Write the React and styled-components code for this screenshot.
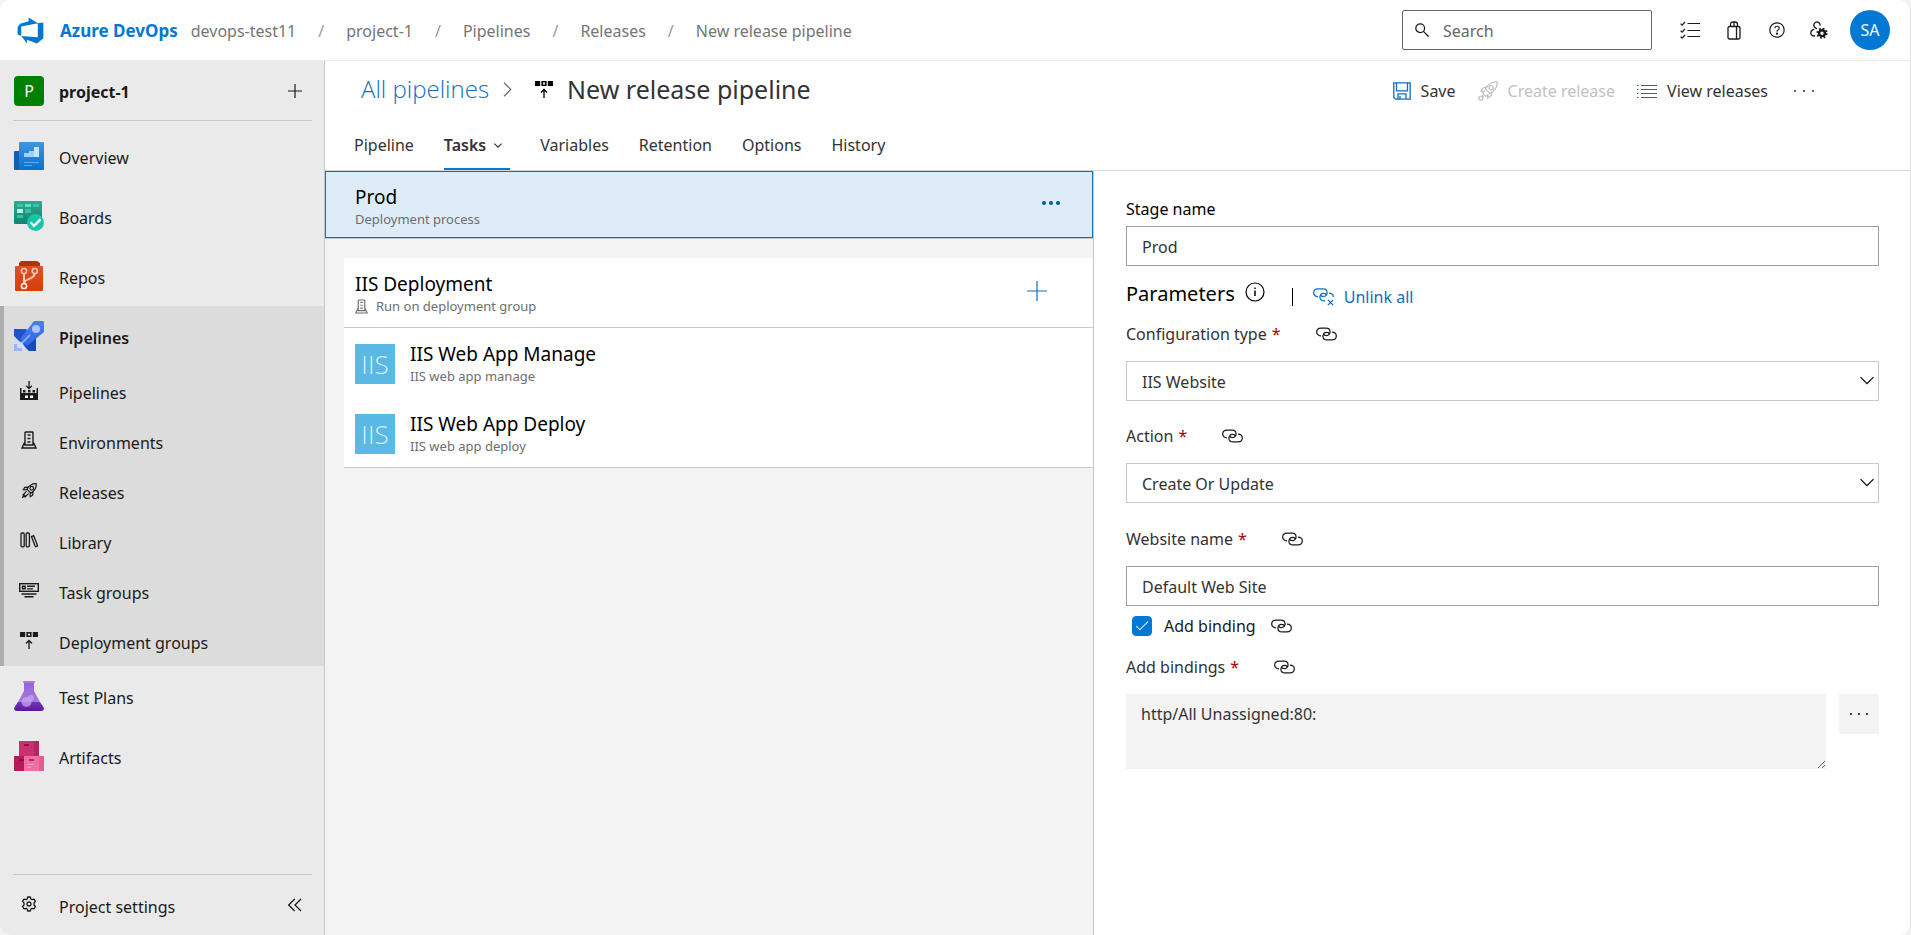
import React from "react";
import styled, { createGlobalStyle, css } from "styled-components";

const GlobalStyle = createGlobalStyle`
  *, *::before, *::after { box-sizing: border-box; }
  html { background: #f3f3f3; }
  body { margin: 0; font-family: "Noto Sans", "Open Sans", sans-serif; font-size: 16px; line-height: 24px; color: #1b1a19; }
  button, input, select, textarea { font: inherit; color: inherit; margin: 0; }
  button { border: 0; background: none; padding: 0; cursor: pointer; }
  a { color: inherit; text-decoration: none; }
  ul { list-style: none; margin: 0; padding: 0; }
  h1, h2, p { margin: 0; font-weight: 400; }
  svg { display: block; flex: none; }
`;

/* ---------- icons ---------- */

const Svg = ({ w = 20, h = w, box = `0 0 ${w} ${h}`, children, ...rest }) => (
  <svg width={w} height={h} viewBox={box} fill="none" stroke="currentColor" aria-hidden="true" {...rest}>
    {children}
  </svg>
);

const LogoIcon = () => (
  <Svg w={29} box="0 0 18 18" stroke="none">
    <path fill="#0078d4" d="M17 4v9.74l-4 3.28-6.2-2.26V17l-3.51-4.59 10.23.8V4.44zm-3.41.49L7.85 1v2.29L2.58 4.84 1 6.87v4.61l2.26 1V6.57z" />
  </Svg>
);

const SearchIcon = () => (
  <Svg w={14} strokeWidth="1.300">
    <circle cx="5.200" cy="5.200" r="4.400" />
    <path d="M8.400 8.400l5.200 5.200" />
  </Svg>
);

const ChecklistIcon = () => (
  <Svg w={20} h={18} strokeWidth="1.200">
    <path d="M7.500 2.500H20M7.500 9.500H20M7.500 15.500H20" />
    <path d="M.6 2.600l1.500 1.500L5 1M.6 9.600l1.500 1.500L5 8M.6 15.600l1.500 1.500L5 14" />
  </Svg>
);

const BagIcon = () => (
  <Svg w={14} h={19} strokeWidth="1.300">
    <rect x="1" y="5.500" width="12" height="12.500" rx="1.500" />
    <path d="M3.500 5.500V3.500Q3.500 1 6 1h2q2.500 0 2.500 2.500v2M7 1v4.500M9.500 5.500V18" />
  </Svg>
);

const HelpIcon = () => (
  <Svg w={16} strokeWidth="1.200">
    <circle cx="8" cy="8" r="7.200" />
    <path d="M5.900 6.300c0-2.800 4.300-2.700 4.300-.1 0 1.700-2.200 1.700-2.200 3.500" />
    <circle cx="8" cy="11.700" r=".5" fill="currentColor" />
  </Svg>
);

const UserSettingsIcon = () => (
  <Svg w={18} h={18} strokeWidth="1.300">
    <path d="M4.700 6.200a3.100 3.100 0 1 1 5.300-1.500M4.700 6.200c.6.900 1.300 1.300 2.300 1.500M4.200 8.200C1.800 9 .8 10.700.8 12c0 2 1.700 3 4.200 3" />
    <circle cx="12" cy="12.200" r="2.900" strokeWidth="2.400" />
    <circle cx="12" cy="12.200" r="4.700" strokeWidth="1.800" strokeDasharray="1.850 1.840" />
  </Svg>
);

const OverviewIcon = () => (
  <Svg w={30} stroke="none">
    <defs>
      <linearGradient id="ov" x1="0" y1="0" x2="0" y2="1"><stop stopColor="#3f96e0" /><stop offset="1" stopColor="#0672d2" /></linearGradient>
    </defs>
    <path fill="#1361ae" d="M1 10h6v19H1a1 1 0 0 1-1-1V11a1 1 0 0 1 1-1z" />
    <rect x="5" y="1" width="25" height="28" rx="1" fill="url(#ov)" />
    <path fill="#a4d0f6" d="M10 12h5v-2h5V6h5v10H10z" />
    <path fill="#e3f2ff" d="M20 6h5v10h-5z" opacity=".6" />
    <path fill="#5eaef0" d="M10 21h15v1H10zM10 24h8v1h-8z" />
  </Svg>
);

const BoardsIcon = () => (
  <Svg w={30} stroke="none">
    <defs>
      <linearGradient id="bo" x1="0" y1="0" x2="0" y2="1"><stop stopColor="#31a892" /><stop offset="1" stopColor="#128470" /></linearGradient>
    </defs>
    <rect width="28" height="23" rx="1" fill="url(#bo)" />
    <path fill="#37c2a4" d="M3 3h6v3H3zM19 3h6v3h-6zM11 8h6v4h-6zM3 14h6v3H3z" />
    <path fill="#5ce0c5" d="M11 3h6v3h-6z" />
    <path fill="#b5fff0" d="M3 8h6v4H3z" />
    <circle cx="21.500" cy="21.500" r="8.500" fill="#1cc5a8" />
    <path stroke="#fff" strokeWidth="2.400" fill="none" d="M16.500 21.500l3.500 3.300 6.500-6.500" />
  </Svg>
);

const ReposIcon = () => (
  <Svg w={30} strokeWidth="1.500" stroke="#ffc9b0">
    <defs>
      <linearGradient id="re" x1="0" y1="0" x2="0" y2="1"><stop stopColor="#d9522b" /><stop offset="1" stopColor="#dc3c06" /></linearGradient>
    </defs>
    <path fill="#b83106" stroke="none" d="M7 0h16l3 2v4H5V2z" />
    <rect x="1" y="5" width="28" height="25" rx="1" fill="url(#re)" stroke="none" />
    <path d="M10 13v9M20.500 13c0 5-9 4.500-10.300 8.500" strokeWidth="2" />
    <circle cx="10" cy="10" r="2.600" />
    <circle cx="20.800" cy="10" r="2.600" />
    <circle cx="10" cy="25" r="2.600" stroke="#fff" />
  </Svg>
);

const RocketIcon = () => (
  <Svg w={30} stroke="none">
    <defs>
      <linearGradient id="ro" x1="0" y1="0" x2="0" y2="1"><stop stopColor="#4d7ff0" /><stop offset="1" stopColor="#2f66e4" /></linearGradient>
    </defs>
    <path fill="#1d55c6" d="M0 8h12l10 10v12h-7L0 15z" />
    <path fill="#164bbd" d="M22 15v15h-7l-4-5z" />
    <path fill="url(#ro)" d="M20 0h9a1 1 0 0 1 1 1v10L13 25l-7-7z" />
    <circle cx="22" cy="8" r="4" fill="#a9c4ff" />
    <path stroke="#86a9fa" strokeWidth="1.800" d="M7 23l9-9" />
    <path fill="#c9daff" d="M3 20l5 1 3 5-4-2v2l-3-3H1z" opacity=".8" />
    <path fill="#94b6f8" d="M0 23h3v4h5v3H0z" />
  </Svg>
);

const FlaskIcon = () => (
  <Svg w={30} stroke="none">
    <defs>
      <linearGradient id="fl" x1="0" y1="0" x2="0" y2="1"><stop stopColor="#9666d4" /><stop offset="1" stopColor="#a67bdb" /></linearGradient>
      <linearGradient id="fb" x1="0" y1="0" x2="0" y2="1"><stop stopColor="#7434bd" /><stop offset="1" stopColor="#5a189e" /></linearGradient>
    </defs>
    <path fill="url(#fl)" d="M10 1h10v9l6 11H4l6-11z" />
    <rect x="9" width="12" height="2" rx="1" fill="#a67bdb" />
    <path fill="url(#fb)" d="M4 21h22l4 6c0 2-1 3-3 3H3c-2 0-3-1-3-3z" />
    <circle cx="17" cy="17" r="3" fill="#bf96ec" />
    <circle cx="12.500" cy="21" r="5" fill="#c9a3f0" opacity=".75" />
  </Svg>
);

const ArtifactsIcon = () => (
  <Svg w={30} stroke="none">
    <path fill="#cb3170" d="M5 0h20v15H5z" />
    <path fill="#b82461" d="M20 0h5v15h-5z" />
    <path fill="#b51a59" d="M0 15h10v15H1a1 1 0 0 1-1-1z" />
    <path fill="#ee70a3" d="M10 15h20v14a1 1 0 0 1-1 1H10z" />
    <path fill="#e55b93" d="M25 15h5v14a1 1 0 0 1-1 1h-4z" />
    <path fill="#8d1144" d="M10 3h5v2h-5zM5 18h5v2H5z" />
    <path fill="#c8225f" d="M15 18h5v2h-5z" />
    <path fill="#f79fc2" d="M13 23h7v1h-7zM13 26h4v1h-4z" />
  </Svg>
);

const FactoryIcon = () => (
  <Svg w={18} h={19} stroke="none" fill="currentColor">
    <path d="M0 7h1.500v5h15V7H18v12H0z" />
    <path d="M3 9h2.500v2.500H3zM8 9h2.500v2.500H8zM12.500 9H15v2.500h-2.500z" />
    <path d="M5 14.500h3V17H5zM10 14.500h3V17h-3z" fill="#fff" />
    <path d="M8.400 0h1.300v6l1.700-1.700.9.900L9 8.400 5.800 5.200l.9-.9L8.400 6z" />
  </Svg>
);

const ServerIcon = ({ w = 16, h = 18 }) => (
  <Svg w={w} h={h} box="0 0 16 18" strokeWidth="1.400">
    <path d="M4 14V1.700Q4 1 4.700 1h6.600q.7 0 .7.700V14zM3.500 11.500L1 17h14l-2.500-5.500M6.500 4h3M6.500 7.500h3M6.500 11h3" />
  </Svg>
);

const ReleaseIcon = () => (
  <Svg w={15} box="0 0 16 16" strokeWidth="1.300">
    <path d="M15.200.8c-4.400-.3-7.200 1.500-10 5.700l4.300 4.300c4.200-2.800 6-5.600 5.700-10zM6.500 4.300L3 4.600 1.400 7.200l3.500.2M11.700 9.500l-.3 3.500-2.600 1.600-.2-3.500" />
    <circle cx="10.400" cy="5.600" r="1.900" />
    <path d="M4.800 9L1.200 12.600l1 .2-1.400 2.400 2.400-1.400.2 1L7 11.200" />
  </Svg>
);

const LaunchIcon = () => (
  <Svg w={20} strokeWidth="1.300">
    <path d="M19.200.8c-5.500-.3-9 2-11.700 7.200l4.500 4.500c5.200-2.700 7.500-6.200 7.200-11.700zM8.500 6.200l-3.200.600L3 10.200l4 .1M13.800 11.500l-.600 3.200-3.400 2.300-.1-4M6.500 9.500l-2 2.500 3.500 3.500 2.500-2" />
    <circle cx="13.200" cy="6.800" r="2.100" />
    <circle cx="2.800" cy="17.200" r="2" />
    <path d="M4.500 14v1.500h1.500" />
  </Svg>
);

const LibraryIcon = () => (
  <Svg w={18} h={16} strokeWidth="1.300">
    <rect x="1" y="1" width="3.200" height="13.800" rx="1" />
    <rect x="6.200" y="1" width="3.200" height="13.800" rx="1" />
    <path d="M11.400 4.600l2.300-.9 4 10.200-2.300.9z" strokeLinejoin="round" />
  </Svg>
);

const TaskGroupIcon = () => (
  <Svg w={20} h={15} strokeWidth="1.400">
    <rect x=".7" y=".7" width="18.600" height="7.600" />
    <path d="M3.500 3.200h2.600v2.600H3.500zM8 3.200h8M8 5.900h6M2.500 11h15M5.500 13.800h9" />
  </Svg>
);

const DeployIcon = () => (
  <Svg w={18} h={17} stroke="none" fill="currentColor">
    <path d="M0 0h5.200v5H0zM12.800 0H18v5h-5.200z" />
    <path fillRule="evenodd" d="M6.400 0h5.200v5H6.400zm1.600 1.500v2h2v-2z" />
    <path fill="none" stroke="currentColor" strokeWidth="1.300" d="M9 17V8.500M6 11.500l3-3 3 3" />
  </Svg>
);

const GearIcon = () => (
  <Svg w={16} strokeWidth="1.300">
    <path strokeLinejoin="round" d="M6.700 1h2.600l.5 2 1.300.7 2-.6 1.300 2.300L13 7v2l1.400 1.500-1.300 2.300-2-.5-1.300.7-.5 2H6.700l-.5-2-1.300-.7-2 .5-1.300-2.300L3 9V7L1.600 5.400l1.300-2.300 2 .6L6.200 3z" />
    <circle cx="8" cy="8" r="2" />
  </Svg>
);

const CollapseIcon = () => (
  <Svg w={14} strokeWidth="1.300"><path d="M6.700 1l-6 6 6 6M13 1L7 7l6 6" /></Svg>
);

const PlusIcon = ({ w = 14 }) => (
  <Svg w={w} strokeWidth="1.200"><path d={`M${w / 2} 0v${w}M0 ${w / 2}h${w}`} /></Svg>
);

const ChevronRight = () => (
  <Svg w={9} h={15} strokeWidth="1.200" stroke="#666"><path d="M1 .8l6.800 6.700L1 14.200" /></Svg>
);

const ChevronDown = ({ w = 8 }) => (
  <Svg w={w} h={w / 2 + 1} box="0 0 8 5" strokeWidth={w > 8 ? 0.65 : 1.2}><path d="M.4.6L4 4.200 7.600.6" /></Svg>
);

const SaveIcon = () => (
  <Svg w={18} strokeWidth="1.300">
    <path d="M.8.800h16.400v16.400H2.600L.8 15.400zM3.500.800v8h11v-8M5 17v-5.200h8V17M7 17v-3" />
  </Svg>
);

const ListIcon = () => (
  <Svg w={20} h={14} strokeWidth="1.200">
    <path d="M4 1.500h16M4 5.500h16M4 9.500h16M4 13.500h16M0 1.500h1.500M0 5.500h1.500M0 9.500h1.500M0 13.500h1.500" />
  </Svg>
);

const Dots = ({ r = 1, gap = 8 }) => (
  <Svg w={gap * 2 + 6} h={6} stroke="none" fill="currentColor">
    <circle cx="3" cy="3" r={r} /><circle cx={3 + gap} cy="3" r={r} /><circle cx={3 + gap * 2} cy="3" r={r} />
  </Svg>
);

const InfoIcon = () => (
  <Svg w={20} strokeWidth="1.200">
    <circle cx="10" cy="10" r="9" />
    <path d="M10 8.500V14M10 5.500v1.500" strokeWidth="1.500" />
  </Svg>
);

const LinkIcon = ({ unlink }) => (
  <Svg w={21} h={unlink ? 18 : 14} box={unlink ? "0 0 20 17" : "0 0 20 13"} strokeWidth="1.200">
    <path d="M4.800 8.300C-.7 8.300-.7.800 4.800.8h4.800c5 0 5 7.200.4 7.200-1.500 0-2.500-.5-2.500-1.500" />
    <path d={unlink
      ? "M15.200 4.700c2.700 0 4.100 1.700 4.100 3.700M11.500 12.200h-1.100c-5 0-5-7.200-.4-7.200 1.500 0 2.500.5 2.500 1.500"
      : "M15.200 4.700c5.500 0 5.500 7.500 0 7.500h-4.800c-5 0-5-7.200-.4-7.200 1.500 0 2.500.5 2.500 1.500"} />
    {unlink && <path d="M14.200 11.200l5 5M19.200 11.200l-5 5" />}
  </Svg>
);

/* ---------- shell ---------- */

const Shell = styled.div`
  min-height: 100vh;
  display: flex;
  flex-direction: column;
  background: #fff;
  border-right: 1px solid #e3e3e3;
  border-radius: 10px;
  overflow: hidden;
`;

const TopBar = styled.header`
  display: flex;
  align-items: center;
  height: 61px;
  padding: 0 20px 0 16px;
  border-bottom: 1px solid #eaeaea;
`;

const Brand = styled.a`
  display: flex;
  align-items: center;
  gap: 15px;
  margin-right: 13px;
  padding-top: 1px;
  font-size: 17px;
  font-weight: 700;
  color: #0078d4;
`;

const Crumbs = styled.nav`
  flex: 1;
  display: flex;
  gap: 22px;
  padding-top: 2px;
  color: #757575;
`;

const CrumbSlash = styled.span`
  color: #9a9a9a;
`;

const SearchBox = styled.label`
  display: flex;
  align-items: center;
  gap: 14px;
  width: 250px;
  height: 40px;
  padding: 0 12px;
  border: 1px solid #666;
  border-radius: 2px;
`;

const SearchInput = styled.input`
  flex: 1;
  min-width: 0;
  padding: 2px 0 0;
  border: 0;
  outline: 0;
  background: none;
  &::placeholder { color: #666; opacity: 1; }
`;

const TopActions = styled.div`
  display: flex;
  align-items: center;
  margin-left: 17px;
`;

const IconButton = styled.button`
  display: grid;
  place-items: center;
  width: ${(p) => p.$size || 42}px;
  height: ${(p) => p.$height || 40}px;
`;

const Avatar = styled.button`
  width: 40px;
  height: 40px;
  margin-left: 9px;
  border-radius: 50%;
  background: #0078d4;
  color: #fff;
`;

const Body = styled.div`
  flex: 1;
  display: flex;
`;

/* ---------- sidebar ---------- */

const Sidebar = styled.aside`
  flex: none;
  width: 325px;
  display: flex;
  flex-direction: column;
  background: #eaeaea;
  border-right: 1px solid #c8c8c8;
`;

const ProjectRow = styled.div`
  display: flex;
  align-items: center;
  height: 59px;
  padding: 0 11px 0 14px;
`;

const ProjectBadge = styled.span`
  display: grid;
  place-items: center;
  width: 30px;
  height: 30px;
  margin-right: 15px;
  border-radius: 4px;
  background: #008000;
  color: #fff;
`;

const ProjectName = styled.a`
  flex: 1;
  padding-top: 2px;
  font-weight: 700;
`;

const Divider = styled.hr`
  width: calc(100% - 25px);
  height: 1px;
  margin: 0 12px 0 13px;
  border: 0;
  background: #c8c8c8;
`;

const Menu = styled.ul`
  flex: 1;
  padding-top: 5px;
`;

const MenuLink = styled.a`
  display: flex;
  align-items: center;
  gap: 15px;
  height: ${(p) => (p.$sub ? 50 : 60)}px;
  padding: 3px 0 0 14px;
  font-weight: ${(p) => (p.$bold ? 600 : 400)};
`;

const IconSlot = styled.span`
  display: grid;
  place-items: center;
  width: 30px;
  padding-bottom: ${(p) => (p.$sub ? 5 : 3)}px;
`;

const OpenSection = styled.li`
  background: linear-gradient(to right, #adadad 4px, #dcdcdc 4px);
`;

const SettingsRow = styled.div`
  display: flex;
  align-items: center;
  padding-right: 11px;
`;

const SettingsLink = styled(MenuLink)`
  flex: 1;
`;

/* ---------- page header ---------- */

const Main = styled.main`
  flex: 1;
  min-width: 0;
  display: flex;
  flex-direction: column;
`;

const PageHead = styled.div`
  height: 110px;
  display: flex;
  flex-direction: column;
  justify-content: space-between;
  border-bottom: 1px solid #d6d6d6;
`;

const TitleRow = styled.div`
  display: flex;
  align-items: center;
  justify-content: space-between;
  height: 56px;
  padding: 0 94px 0 36px;
`;

const TitlePath = styled.div`
  display: flex;
  align-items: center;
  gap: 14px;
  font-size: 24px;
  line-height: 32px;
`;

const PathLink = styled.a`
  font-family: "Open Sans", "Noto Sans", sans-serif;
  font-weight: 300;
  color: #106ebe;
`;

const Title = styled.h1`
  font-size: 25px;
  line-height: 32px;
  color: #333;
`;

const TitleIcon = styled.span`
  display: flex;
  margin-left: 9px;
  color: #000;
`;

const Toolbar = styled.div`
  display: flex;
  align-items: center;
  gap: 22px;
  padding-top: 4px;
`;

const ToolButton = styled.button`
  display: flex;
  align-items: center;
  gap: 10px;
  color: #333;
  svg { color: #106ebe; }
  &:disabled, &:disabled svg { color: #c2c2c2; }
`;

const MoreButton = styled.button`
  margin-left: 2px;
  color: #333;
`;

const Tabs = styled.nav`
  display: flex;
  gap: 30px;
  padding-left: 29px;
`;

const Tab = styled.a`
  display: flex;
  align-items: center;
  gap: 8px;
  height: 48px;
  border-bottom: 2px solid transparent;
  color: #333;
  ${(p) => p.$active && css`
    padding-right: 8px;
    font-weight: 600;
    border-bottom-color: #0078d4;
  `}
`;

/* ---------- process list ---------- */

const Split = styled.div`
  flex: 1;
  display: grid;
  grid-template-columns: 769fr 816fr;
`;

const ListPane = styled.section`
  background: #f3f3f3;
  border-right: 1px solid #c8c8c8;
`;

const StageRow = styled.div`
  display: flex;
  justify-content: space-between;
  align-items: flex-start;
  height: 67px;
  padding: 14px 20px 0 29px;
  background: #deecf9;
  border: 1px solid #106ebe;
  box-shadow: 0 1px 0 #c8c8c8;
  svg { color: #005a9e; }
`;

const ItemName = styled.p`
  font-size: 19px;
  line-height: 23px;
  color: #000;
`;

const ItemNote = styled.p`
  display: flex;
  align-items: center;
  gap: 8px;
  font-size: 13px;
  line-height: 20px;
  color: #6e6e6e;
`;

const GroupCard = styled.div`
  margin: 20px 0 0 19px;
  background: #fff;
  border-bottom: 1px solid #c8c8c8;
`;

const GroupHead = styled.div`
  display: flex;
  justify-content: space-between;
  height: 70px;
  padding: 15px 35px 0 11px;
  border-bottom: 1px solid #c8c8c8;
`;

const AddButton = styled(IconButton)`
  color: #106ebe;
`;

const TaskRow = styled.li`
  display: flex;
  gap: 15px;
  height: 70px;
  padding: 15px 11px 0;
  &:last-child { height: 69px; }
`;

const TaskBadge = styled.span`
  display: grid;
  place-items: center;
  width: 40px;
  height: 40px;
  margin-top: 1px;
  background: #59b8e4;
  color: #d9eff9;
  font-family: "Open Sans", "Noto Sans", sans-serif;
  font-size: 26px;
  font-weight: 300;
`;

/* ---------- form ---------- */

const FormPane = styled.form`
  padding: 26px 31px 0 32px;
`;

const Field = styled.div`
  margin-top: ${(p) => p.$top || 0}px;
`;

const LabelRow = styled.div`
  display: flex;
  align-items: center;
  gap: ${(p) => p.$gap || 35}px;
  margin-bottom: ${(p) => p.$bottom || 0}px;
  color: ${(p) => (p.$strong ? "#000" : "#333")};
`;

const Required = styled.span`
  margin-left: 5px;
  color: #a80000;
`;

const LinkButton = styled.button`
  color: #1b1a19;
`;

const boxed = css`
  display: block;
  width: 100%;
  height: 40px;
  padding: 1px 15px 0;
  border: 1px solid #a0a0a0;
  border-radius: 0;
  background: #fff;
  color: #333;
`;

const TextInput = styled.input`${boxed}`;

const SelectWrap = styled.div`
  position: relative;
  svg { position: absolute; right: 4px; top: 15px; pointer-events: none; color: #000; }
`;

const Select = styled.select`
  ${boxed}
  border-color: #c8c8c8;
  appearance: none;
`;

const ParamRow = styled.div`
  display: flex;
  align-items: center;
  height: 30px;
  margin: 13px 0;
`;

const ParamTitle = styled.h2`
  display: flex;
  align-items: center;
  gap: 10px;
  font-size: 20px;
  line-height: 30px;
  color: #000;
`;

const InfoButton = styled.button`
  padding-bottom: 4px;
`;

const Bar = styled.span`
  width: 1px;
  height: 18px;
  margin: 6px 20px 0 27px;
  background: #000;
`;

const UnlinkAll = styled.button`
  display: flex;
  align-items: center;
  gap: 10px;
  padding-top: 6px;
  color: #106ebe;
`;

const CheckLabel = styled.label`
  display: flex;
  align-items: center;
  gap: 12px;
  padding-left: 6px;
  color: #1b1a19;
`;

const CheckBox = styled.input`
  appearance: none;
  width: 20px;
  height: 20px;
  border-radius: 4px;
  border: 1px solid #666;
  display: grid;
  place-items: center;
  &:checked { background: #0078d4; border-color: #0078d4; }
  &:checked::before {
    content: "";
    width: 12px;
    height: 6px;
    border-left: 1px solid #fff;
    border-bottom: 1px solid #fff;
    transform: translateY(-2px) rotate(-45deg);
  }
`;

const BindingRow = styled.div`
  display: flex;
  align-items: flex-start;
  gap: 13px;
`;

const BindingText = styled.textarea`
  flex: 1;
  height: 75px;
  padding: 8px 15px;
  border: 0;
  background: #f3f3f3;
  color: #333;
  resize: vertical;
`;

const BrowseButton = styled(IconButton)`
  background: #f3f3f3;
  color: #000;
`;

/* ---------- data ---------- */

const crumbs = ["devops-test11", "project-1", "Pipelines", "Releases", "New release pipeline"];

const pipelineItems = [
  ["Pipelines", FactoryIcon],
  ["Environments", ServerIcon],
  ["Releases", ReleaseIcon],
  ["Library", LibraryIcon],
  ["Task groups", TaskGroupIcon],
  ["Deployment groups", DeployIcon],
];

const tabs = ["Pipeline", "Tasks", "Variables", "Retention", "Options", "History"];

const tasks = [
  ["IIS Web App Manage", "IIS web app manage"],
  ["IIS Web App Deploy", "IIS web app deploy"],
];

const NavItem = ({ icon: Icon, label, sub, bold }) => (
  <MenuLink href="#" $sub={sub} $bold={bold}>
    <IconSlot $sub={sub}><Icon /></IconSlot>
    {label}
  </MenuLink>
);

const FieldLabel = ({ id, children }) => (
  <LabelRow $bottom={15}>
    <label htmlFor={id}>{children}<Required>*</Required></label>
    <LinkButton type="button" aria-label="Link setting"><LinkIcon /></LinkButton>
  </LabelRow>
);

const SelectField = ({ id, label, value, top }) => (
  <Field $top={top}>
    <FieldLabel id={id}>{label}</FieldLabel>
    <SelectWrap>
      <Select id={id} defaultValue={value}><option>{value}</option></Select>
      <ChevronDown w={16} />
    </SelectWrap>
  </Field>
);

export default function App() {
  return (
    <Shell>
      <GlobalStyle />
      <TopBar>
        <Brand href="#"><LogoIcon />Azure DevOps</Brand>
        <Crumbs aria-label="Breadcrumb">
          {crumbs.map((c, i) => (
            <React.Fragment key={c}>
              {i > 0 && <CrumbSlash>/</CrumbSlash>}
              <a href="#">{c}</a>
            </React.Fragment>
          ))}
        </Crumbs>
        <SearchBox>
          <SearchIcon />
          <SearchInput type="text" placeholder="Search" aria-label="Search" />
        </SearchBox>
        <TopActions>
          <IconButton aria-label="Work items"><ChecklistIcon /></IconButton>
          <IconButton $size={46} aria-label="Marketplace"><BagIcon /></IconButton>
          <IconButton $size={40} aria-label="Help"><HelpIcon /></IconButton>
          <IconButton $size={44} aria-label="User settings"><UserSettingsIcon /></IconButton>
          <Avatar>SA</Avatar>
        </TopActions>
      </TopBar>

      <Body>
        <Sidebar>
          <ProjectRow>
            <ProjectBadge>P</ProjectBadge>
            <ProjectName href="#">project-1</ProjectName>
            <IconButton $size={36} aria-label="Add"><PlusIcon /></IconButton>
          </ProjectRow>
          <Divider />
          <Menu>
            <li><NavItem icon={OverviewIcon} label="Overview" /></li>
            <li><NavItem icon={BoardsIcon} label="Boards" /></li>
            <li><NavItem icon={ReposIcon} label="Repos" /></li>
            <OpenSection>
              <NavItem icon={RocketIcon} label="Pipelines" bold />
              <ul>
                {pipelineItems.map(([label, icon]) => (
                  <li key={label}><NavItem icon={icon} label={label} sub /></li>
                ))}
              </ul>
            </OpenSection>
            <li><NavItem icon={FlaskIcon} label="Test Plans" /></li>
            <li><NavItem icon={ArtifactsIcon} label="Artifacts" /></li>
          </Menu>
          <Divider />
          <SettingsRow>
            <SettingsLink href="#"><IconSlot $sub><GearIcon /></IconSlot>Project settings</SettingsLink>
            <IconButton $size={36} aria-label="Collapse"><CollapseIcon /></IconButton>
          </SettingsRow>
        </Sidebar>

        <Main>
          <PageHead>
            <TitleRow>
              <TitlePath>
                <PathLink href="#">All pipelines</PathLink>
                <ChevronRight />
                <TitleIcon><DeployIcon /></TitleIcon>
                <Title>New release pipeline</Title>
              </TitlePath>
              <Toolbar>
                <ToolButton><SaveIcon />Save</ToolButton>
                <ToolButton disabled><LaunchIcon />Create release</ToolButton>
                <ToolButton><ListIcon />View releases</ToolButton>
                <MoreButton aria-label="More"><Dots gap={9} /></MoreButton>
              </Toolbar>
            </TitleRow>
            <Tabs>
              {tabs.map((t) => (
                <Tab href="#" key={t} $active={t === "Tasks"}>
                  {t}{t === "Tasks" && <ChevronDown />}
                </Tab>
              ))}
            </Tabs>
          </PageHead>

          <Split>
            <ListPane>
              <StageRow>
                <div>
                  <ItemName>Prod</ItemName>
                  <ItemNote>Deployment process</ItemNote>
                </div>
                <IconButton $height={34} aria-label="Stage actions"><Dots r={2} gap={7} /></IconButton>
              </StageRow>
              <GroupCard>
                <GroupHead>
                  <div>
                    <ItemName>IIS Deployment</ItemName>
                    <ItemNote><ServerIcon w={13} h={15} />Run on deployment group</ItemNote>
                  </div>
                  <AddButton $height={36} aria-label="Add task"><PlusIcon w={20} /></AddButton>
                </GroupHead>
                <ul>
                  {tasks.map(([name, note]) => (
                    <TaskRow key={name}>
                      <TaskBadge>IIS</TaskBadge>
                      <div>
                        <ItemName>{name}</ItemName>
                        <ItemNote>{note}</ItemNote>
                      </div>
                    </TaskRow>
                  ))}
                </ul>
              </GroupCard>
            </ListPane>

            <FormPane onSubmit={(e) => e.preventDefault()}>
              <LabelRow $bottom={5} $strong><label htmlFor="stage">Stage name</label></LabelRow>
              <TextInput id="stage" type="text" defaultValue="Prod" />
              <ParamRow>
                <ParamTitle>
                  Parameters
                  <InfoButton type="button" aria-label="About parameters"><InfoIcon /></InfoButton>
                </ParamTitle>
                <Bar />
                <UnlinkAll type="button"><LinkIcon unlink />Unlink all</UnlinkAll>
              </ParamRow>
              <SelectField id="config" label="Configuration type" value="IIS Website" />
              <SelectField id="action" label="Action" value="Create Or Update" top={23} />
              <Field $top={24}>
                <FieldLabel id="site">Website name</FieldLabel>
                <TextInput id="site" type="text" defaultValue="Default Web Site" />
              </Field>
              <Field $top={8}>
                <LabelRow $gap={15}>
                  <CheckLabel><CheckBox type="checkbox" defaultChecked />Add binding</CheckLabel>
                  <LinkButton type="button" aria-label="Link setting"><LinkIcon /></LinkButton>
                </LabelRow>
              </Field>
              <Field $top={17}>
                <FieldLabel id="bindings">Add bindings</FieldLabel>
                <BindingRow>
                  <BindingText id="bindings" defaultValue="http/All Unassigned:80:" />
                  <BrowseButton type="button" $size={40} aria-label="Edit bindings"><Dots gap={8} /></BrowseButton>
                </BindingRow>
              </Field>
            </FormPane>
          </Split>
        </Main>
      </Body>
    </Shell>
  );
}
